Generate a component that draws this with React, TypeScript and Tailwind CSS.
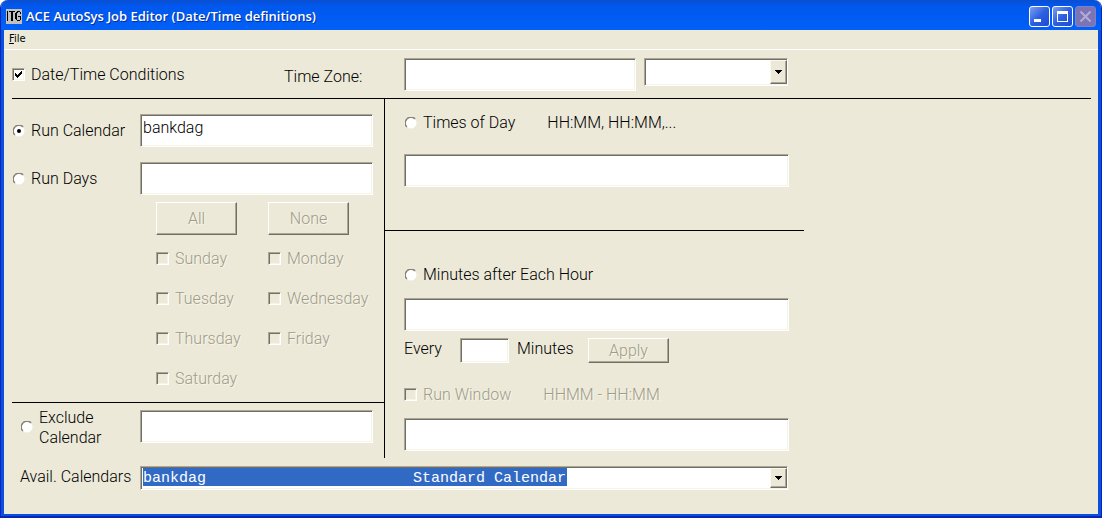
import type { InputHTMLAttributes, ReactNode, SelectHTMLAttributes } from "react";

const sunken = "border border-t-[#aca899] border-l-[#aca899] border-r-white border-b-white shadow-[inset_1px_1px_0_#716f64,inset_-1px_-1px_0_#f6f4e8]";
const etched = "text-[#9f9b8b] [text-shadow:1px_1px_0_#f8f6ea]";

type InputProps = InputHTMLAttributes<HTMLInputElement>;

const TextBox = ({ className = "", ...props }: InputProps) => (
    <input type="text" className={`${sunken} block min-w-0 bg-white px-0.5 text-base text-black outline-none ${className}`} {...props} />
);

const Check = ({ label, ...props }: InputProps & { label: string }) => (
    <label className={`flex items-center gap-1.5 leading-5 ${props.disabled ? etched : ""}`}>
        <span className="relative block size-[13px] shrink-0">
            <input
                type="checkbox"
                className={`${sunken} peer block size-[13px] appearance-none ${props.disabled ? "bg-[#ece9d8]" : "bg-white"}`}
                {...props}
            />
            <svg viewBox="0 0 13 13" shapeRendering="crispEdges" className="pointer-events-none absolute inset-0 hidden size-[13px] peer-checked:block">
                <path d="M3 5h1v1h1v1h1v-1h1v-1h1v-1h1v-1h1v3h-1v1h-1v1h-1v1h-1v1h-1v-1h-1v-1h-1z" fill="#000" />
            </svg>
        </span>
        <span className="pt-0.5">{label}</span>
    </label>
);

const Radio = ({ children, ...props }: InputProps & { children: ReactNode }) => (
    <label className="flex items-center gap-1.5 pl-px leading-5">
        <span className="relative block size-3 shrink-0">
            <input type="radio" name="condition" className="peer block size-3 appearance-none" {...props} />
            <svg viewBox="0 0 12 12" className="pointer-events-none absolute inset-0 size-3">
                <circle cx="6" cy="6" r="5.5" fill="#fff" />
                <path d="M1.9 10.1A5.5 5.5 0 0 1 10.1 1.9" fill="none" stroke="#858273" strokeWidth="1.4" />
            </svg>
            <svg viewBox="0 0 12 12" className="pointer-events-none absolute inset-0 hidden size-3 peer-checked:block">
                <circle cx="6" cy="6" r="2" fill="#000" />
            </svg>
        </span>
        {children}
    </label>
);

const PushButton = ({ children, className = "" }: { children: ReactNode; className?: string }) => (
    <button
        type="button"
        disabled
        className={`border border-t-white border-l-white border-r-[#716f64] border-b-[#716f64] shadow-[inset_-1px_-1px_0_#aca899] ${etched} ${className}`}
    >
        {children}
    </button>
);

const DropDown = ({ className = "", selectClass = "", children, ...props }: SelectHTMLAttributes<HTMLSelectElement> & { selectClass?: string }) => (
    <div className={`relative ${className}`}>
        <select className={`${sunken} block h-full w-full appearance-none bg-white outline-none ${selectClass}`} {...props}>
            {children}
        </select>
        <span className="pointer-events-none absolute top-0.5 right-px bottom-0.5 flex w-[17px] items-center justify-center border border-t-[#fbfaf0] border-l-[#fbfaf0] border-r-[#716f64] border-b-[#716f64] bg-[#ece9d8] shadow-[inset_-1px_-1px_0_#aca899]">
            <svg viewBox="0 0 7 4" shapeRendering="crispEdges" className="h-1 w-[7px]">
                <path d="M0 0h7v1h-1v1h-1v1h-1v1h-1v-1h-1v-1h-1v-1h-1z" />
            </svg>
        </span>
    </div>
);

const Caption = ({ label, disabled, children }: { label: string; disabled?: boolean; children: ReactNode }) => (
    <button
        type="button"
        aria-label={label}
        disabled={disabled}
        className={`flex size-[21px] items-center justify-center rounded-[3px] border ${disabled ? "border-[#7d80cc] bg-[#7d74b4]" : "border-white bg-linear-to-br from-[#7f9ff0] via-[#2c5fe0] to-[#1c4bd4]"}`}
    >
        <svg viewBox="0 0 19 19" className="size-[19px]">{children}</svg>
    </button>
);

const TitleBar = () => (
    <header className="flex h-[30px] items-center bg-linear-to-b from-[#0a4fd0] via-[#0058ee] via-20% to-[#0060f8] px-[5px] pt-0.5">
        <svg viewBox="0 0 16 15" shapeRendering="crispEdges" className="h-[15px] w-4" aria-hidden="true">
            <rect width="16" height="15" fill="#c0c0c0" />
            <path d="M1 2h1v10h-1zM3 2h6v1h-6zM5 2h2v10h-2zM11 2h3v1h-3zM9 4h2v6h-2zM10 3h2v1h-2zM14 3h1v2h-1zM10 10h1v1h-1zM11 11h3v1h-3zM12 7h3v1h-3zM14 7h1v4h-1z" />
        </svg>
        <h1 className="ml-1 flex-1 font-['Open_Sans','Noto_Sans',sans-serif] text-[13px] leading-5 font-semibold text-white [text-shadow:1px_1px_0_#0a2f9a]">
            ACE AutoSys Job Editor (Date/Time definitions)
        </h1>
        <div className="flex gap-0.5">
            <Caption label="Minimize">
                <path d="M4 12h7v3h-7z" fill="#fff" />
            </Caption>
            <Caption label="Maximize">
                <path d="M4 4h11v11h-11zM5 7v7h9v-7z" fill="#fff" fillRule="evenodd" />
            </Caption>
            <Caption label="Close" disabled>
                <path d="M4.500 4.500l10 10M14.500 4.500l-10 10" stroke="#b4acd8" strokeWidth="2" />
            </Caption>
        </div>
    </header>
);

const weekdays = ["Sunday", "Monday", "Tuesday", "Wednesday", "Thursday", "Friday", "Saturday"];

const RunPanel = () => (
    <section className="pt-[15px]">
        <div className="grid grid-cols-[128px_1fr] items-center gap-y-[15px] pr-[11px]">
            <Radio defaultChecked>Run Calendar</Radio>
            <TextBox aria-label="Run Calendar" defaultValue="bankdag" className="h-[33px] pb-1.5" />
            <Radio>Run Days</Radio>
            <TextBox aria-label="Run Days" className="h-[33px]" />
        </div>
        <div className="mt-[7px] ml-36 grid grid-cols-2 gap-x-[31px] pr-[35px]">
            <PushButton className="h-[33px]">All</PushButton>
            <PushButton className="h-[33px]">None</PushButton>
        </div>
        <div className="mt-3 ml-36 grid grid-cols-[112px_1fr] gap-y-[18px]">
            {weekdays.map((day) => (
                <Check key={day} label={day} disabled />
            ))}
        </div>
        <div className="mt-[13px] grid grid-cols-[128px_1fr] items-start border-t border-black pt-[3px] pr-[11px]">
            <div className="pl-2">
                <Radio>
                    <span className="pt-0.5">Exclude<br />Calendar</span>
                </Radio>
            </div>
            <TextBox aria-label="Exclude Calendar" className="mt-1 h-[33px]" />
        </div>
    </section>
);

const TimesPanel = () => (
    <section className="border-l border-black">
        <div className="border-b border-black pt-[14px] pr-[15px] pb-[43px] pl-[19px]">
            <div className="flex gap-8">
                <Radio>Times of Day</Radio>
                <span className="leading-5">HH:MM, HH:MM,...</span>
            </div>
            <TextBox aria-label="Times of Day" className="mt-[21px] h-[33px] w-full" />
        </div>
        <div className="pt-[34px] pr-[15px] pb-[7px] pl-[19px]">
            <Radio>Minutes after Each Hour</Radio>
            <TextBox aria-label="Minutes after Each Hour" className="mt-[13px] h-[33px] w-full" />
            <div className="mt-[7px] flex">
                <label htmlFor="every" className="w-14 leading-[22px]">Every</label>
                <TextBox id="every" className="h-[25px] w-[49px]" />
                <span className="ml-2 w-[71px] leading-[22px]">Minutes</span>
                <PushButton className="h-[25px] w-[81px]">Apply</PushButton>
            </div>
            <div className="mt-5 flex gap-8">
                <Check label="Run Window" disabled />
                <span className={`pt-0.5 leading-5 ${etched}`}>HHMM - HH:MM</span>
            </div>
            <TextBox aria-label="Run Window" className="mt-[13px] h-[33px] w-full" />
        </div>
    </section>
);

const App = () => (
    <div className="flex min-h-screen flex-col overflow-hidden rounded-t-lg border-x border-b-2 border-[#0a24b4] bg-[#ece9d8] font-['Roboto','Liberation_Sans',sans-serif] text-base font-light text-black">
        <TitleBar />
        <div className="flex-1 border-x-[3px] border-b-2 border-[#0a50e0]">
            <nav className="h-5 border-b border-white pl-1">
                <button type="button" className="block px-px font-['DejaVu_Sans_Condensed','DejaVu_Sans',sans-serif] text-[11px] leading-[18px] font-normal"><u>F</u>ile</button>
            </nav>
            <main className="px-2 pt-2">
                <div className="flex h-10 items-start">
                    <div className="w-[272px] pt-[5px]">
                        <Check label="Date/Time Conditions" defaultChecked />
                    </div>
                    <label htmlFor="zone" className="w-[120px] pt-2 leading-[22px]">Time Zone:</label>
                    <TextBox id="zone" className="h-[33px] w-[232px]" />
                    <DropDown aria-label="Time Zone list" className="ml-2 h-7 w-36" />
                </div>
                <div className="mr-[-1px] border-t border-black">
                    <div className="grid grid-cols-[372px_minmax(0,420px)]">
                        <RunPanel />
                        <TimesPanel />
                    </div>
                </div>
                <div className="mt-2 grid max-w-[776px] grid-cols-[128px_1fr]">
                    <label htmlFor="calendars" className="pl-2 leading-[22px]">Avail. Calendars</label>
                    <DropDown
                        id="calendars"
                        className="h-6"
                        selectClass="bg-[linear-gradient(#316ac5,#316ac5)] bg-no-repeat bg-[length:424px_18px] bg-origin-content px-0.5 py-px font-['Liberation_Mono','Courier_New',monospace] text-[15px] text-white"
                    >
                        <option>{"bankdag".padEnd(30, "\u00a0") + "Standard\u00a0Calendar"}</option>
                    </DropDown>
                </div>
            </main>
        </div>
    </div>
);

export default App;
